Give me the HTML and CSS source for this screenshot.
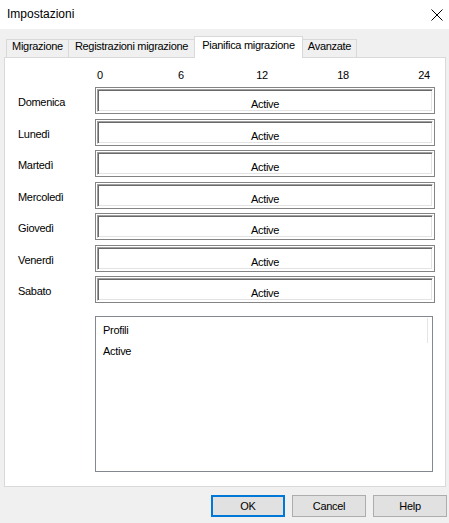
FILE: index.html
```html
<!DOCTYPE html>
<html lang="it">
<head>
<meta charset="utf-8">
<title>Impostazioni</title>
<link rel="stylesheet" href="styles.css">
</head>
<body>
<div class="dialog">
  <div class="titlebar">
    <span class="title">Impostazioni</span>
    <svg class="close" width="12" height="12" viewBox="0 0 12 12" aria-hidden="true">
      <path d="M0.5 0.5 L11.5 11.5 M11.5 0.5 L0.5 11.5" stroke="#000" stroke-width="1" fill="none"/>
    </svg>
  </div>

  <div class="tabs">
    <div class="tab tab-mig">Migrazione</div>
    <div class="tab tab-reg">Registrazioni migrazione</div>
    <div class="tab tab-plan active">Pianifica migrazione</div>
    <div class="tab tab-adv">Avanzate</div>
  </div>

  <div class="panel">
    <div class="axis">
      <span>0</span><span>6</span><span>12</span><span>18</span><span>24</span>
    </div>
    <div class="days">
      <div class="day"><div class="day-name">Domenica</div><div class="bar"><div class="bar-inner">Active</div></div></div>
      <div class="day"><div class="day-name">Lunedì</div><div class="bar"><div class="bar-inner">Active</div></div></div>
      <div class="day"><div class="day-name">Martedì</div><div class="bar"><div class="bar-inner">Active</div></div></div>
      <div class="day"><div class="day-name">Mercoledì</div><div class="bar"><div class="bar-inner">Active</div></div></div>
      <div class="day"><div class="day-name">Giovedì</div><div class="bar"><div class="bar-inner">Active</div></div></div>
      <div class="day"><div class="day-name">Venerdì</div><div class="bar"><div class="bar-inner">Active</div></div></div>
      <div class="day"><div class="day-name">Sabato</div><div class="bar"><div class="bar-inner">Active</div></div></div>
    </div>
    <div class="profiles">
      <div class="profiles-header">Profili</div>
      <div class="profiles-row">Active</div>
    </div>
  </div>

  <div class="buttons">
    <button class="btn btn-default">OK</button>
    <button class="btn">Cancel</button>
    <button class="btn">Help</button>
  </div>
</div>
</body>
</html>
```

FILE: styles.css
```css
html, body {
  margin: 0;
  padding: 0;
}

body {
  width: 449px;
  height: 523px;
  background: #f0f0f0;
  font-family: "Liberation Sans", Arial, sans-serif;
  font-size: 11px;
  letter-spacing: -0.3px;
  color: #000;
  overflow: hidden;
}

.titlebar {
  height: 29px;
  background: #fff;
  display: flex;
  align-items: center;
  justify-content: space-between;
  padding: 0 6px 0 7px;
}

.title {
  font-size: 12px;
  line-height: 15px;
  letter-spacing: 0;
}

.close {
  display: block;
  margin-top: 1px;
}

.tabs {
  margin-top: 7px;
  height: 21px;
  padding-left: 6px;
  display: flex;
  align-items: flex-end;
}

.tab {
  box-sizing: border-box;
  height: 18px;
  border: 1px solid #d9d9d9;
  border-bottom: none;
  background: #f0f0f0;
  text-align: center;
  line-height: 13px;
  white-space: nowrap;
  margin-left: -1px;
}

.tab:first-child {
  margin-left: 0;
}

.tab-mig { width: 63px; }
.tab-reg { width: 127px; }
.tab-plan { width: 109px; }
.tab-adv { width: 55px; }

.tab.active {
  height: 22px;
  margin-bottom: -1px;
  padding-top: 2px;
  background: #fff;
  position: relative;
  z-index: 1;
}

.panel {
  margin-left: 4px;
  width: 442px;
  height: 430px;
  box-sizing: border-box;
  border: 1px solid #d9d9d9;
  background: #fff;
  padding-top: 11px;
}

.axis {
  display: grid;
  grid-template-columns: repeat(5, 81px);
  margin-left: 54.5px;
  line-height: 13px;
}

.axis span {
  text-align: center;
}

.days {
  display: flex;
  flex-direction: column;
  gap: 4.5px;
  margin-top: 5px;
  padding-left: 13px;
}

.day {
  display: flex;
  height: 27px;
}

.day-name {
  width: 77px;
  padding-top: 9px;
  line-height: 13px;
}

.bar {
  width: 340px;
  box-sizing: border-box;
  border: 1px solid #848484;
  padding: 1px;
  background: #fff;
}

.bar-inner {
  height: 100%;
  box-sizing: border-box;
  border: 1px solid;
  border-color: #a0a0a0 #fff #fff #a0a0a0;
  box-shadow: inset 1px 1px 0 #696969, inset -1px -1px 0 #e3e3e3;
  text-align: center;
  padding-top: 8px;
  line-height: 13px;
}

.profiles {
  margin: 13px 0 0 90px;
  width: 338px;
  height: 156px;
  box-sizing: border-box;
  border: 1px solid #828790;
  padding-top: 1px;
}

.profiles-header {
  width: 332px;
  height: 25px;
  box-sizing: border-box;
  border-right: 1px solid #e5e5e5;
  padding: 6px 0 0 7px;
  line-height: 13px;
}

.profiles-row {
  margin-top: 2px;
  padding-left: 7px;
  line-height: 13px;
}

.buttons {
  margin-top: 8px;
  padding-right: 2px;
  display: flex;
  justify-content: flex-end;
  gap: 7px;
}

.btn {
  width: 74px;
  height: 22px;
  box-sizing: border-box;
  border: 1px solid #adadad;
  background: #e1e1e1;
  font-family: "Liberation Sans", Arial, sans-serif;
  font-size: 11px;
  letter-spacing: -0.3px;
  line-height: 13px;
  color: #000;
  padding: 0;
  margin: 0;
}

.btn-default {
  border: 2px solid #0078d7;
}
```
